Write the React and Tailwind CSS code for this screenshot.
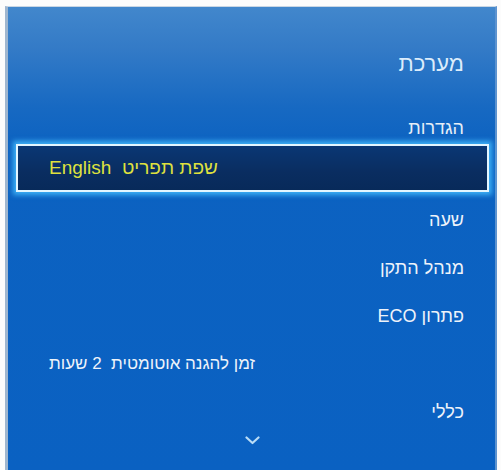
export default function App() {
  const rows = [
    { label: 'שעה' },
    { label: 'מנהל התקן' },
    { label: 'פתרון ECO' },
    { label: 'זמן להגנה אוטומטית  2 שעות', left: true },
    { label: 'כללי' },
  ];

  return (
    <div className="w-[501px] h-[470px] bg-[#fcfcfc] pt-[6px] pl-[5px] pr-[4px] overflow-hidden font-['Liberation_Sans','DejaVu_Sans',sans-serif]">
      <div
        dir="rtl"
        className="h-[470px] border-l-[3px] border-t border-r-[2px] border-l-[#9fb6cf] border-t-[#c9d6e4] border-r-[#5d93cf] bg-[linear-gradient(to_bottom,#4287cc_0px,#347bc7_40px,#1769c2_100px,#0c62c1_140px,#0a61c2_100%)]"
      >
        <div className="pt-[45px] pr-[31px] h-[76px]">
          <div className="text-[22px] leading-[24px] text-[#dcecfb]">מערכת</div>
        </div>
        <div className="mt-[35px] pr-[31px] text-[18px] leading-[20px] text-[#e6eef7]">הגדרות</div>

        <div className="mt-[6px] mr-[6px] ml-[8px] h-[48px] border-2 border-[#e4f6ff] shadow-[0_0_5px_3px_rgba(70,190,255,0.85)] bg-[linear-gradient(to_bottom,#0a3774,#0a2d60_60%,#082a5a)] flex items-center pl-[31px]">
          <div className="w-full text-left text-[19px] text-[#dfe13e]">
            שפת תפריט&nbsp; English
          </div>
        </div>

        <div className="mt-[4px] flex flex-col">
          {rows.map((r) => (
            <div
              key={r.label}
              className={`h-[48px] flex items-center text-[#eef3fa] ${
                r.left ? 'pl-[41px] justify-end text-[17px]' : 'pr-[31px] text-[18px]'
              }`}
            >
              <span className="whitespace-pre">{r.label}</span>
            </div>
          ))}
        </div>

        <div className="flex justify-center pl-[2px]">
          <svg width="15" height="9" viewBox="0 0 15 9" fill="none">
            <path d="M1.5 1.5 L7.5 7 L13.5 1.5" stroke="#b9dcf6" strokeWidth="2.2" strokeLinecap="round" strokeLinejoin="round" />
          </svg>
        </div>
      </div>
    </div>
  );
}
